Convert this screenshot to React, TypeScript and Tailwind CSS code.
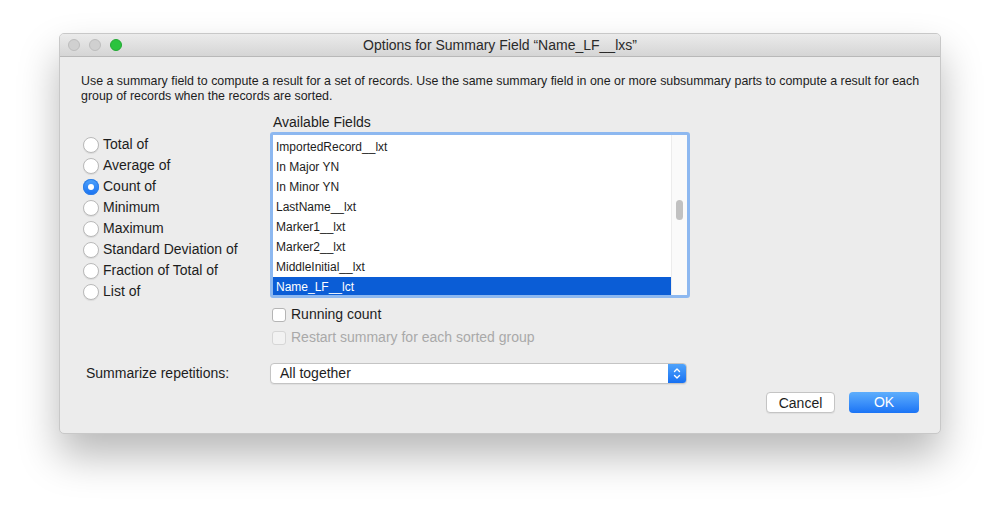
const aggregates = [
  'Total of',
  'Average of',
  'Count of',
  'Minimum',
  'Maximum',
  'Standard Deviation of',
  'Fraction of Total of',
  'List of',
];

const fields = [
  'ImportedRecord__lxt',
  'In Major YN',
  'In Minor YN',
  'LastName__lxt',
  'Marker1__lxt',
  'Marker2__lxt',
  'MiddleInitial__lxt',
  'Name_LF__lct',
];

const Radio = ({ on }: { on: boolean }) =>
  on ? (
    <span className="w-4 h-4 rounded-full bg-gradient-to-b from-[#4fa3fb] to-[#1670f2] flex items-center justify-center shadow-[inset_0_0_0_1px_#2f7fe6]">
      <span className="w-[6px] h-[6px] rounded-full bg-white" />
    </span>
  ) : (
    <span className="w-4 h-4 rounded-full bg-white border border-[#b9b9b9] shadow-[0_1px_1px_rgba(0,0,0,0.08)]" />
  );

export default function App() {
  return (
    <div
      className="w-[1000px] h-[518px] bg-white pt-[33px] pl-[59px] text-[#1d1d1d]"
      style={{ fontFamily: '"Liberation Sans", Arial, sans-serif' }}
    >
      <div className="w-[882px] h-[401px] rounded-[5px] bg-[#ececec] border border-[#c8c8c8] shadow-[0_22px_40px_rgba(0,0,0,0.28)] overflow-hidden flex flex-col">
        {/* title bar */}
        <div className="h-[23px] shrink-0 bg-gradient-to-b from-[#ebebeb] to-[#d5d5d5] border-b border-[#b8b8b8] flex items-center relative">
          <div className="flex gap-[9px] pl-[8px]">
            <span className="w-3 h-3 rounded-full bg-[#d0d0d0] border border-[#bdbdbd]" />
            <span className="w-3 h-3 rounded-full bg-[#d0d0d0] border border-[#bdbdbd]" />
            <span className="w-3 h-3 rounded-full bg-[#2ac33e] border border-[#22a833]" />
          </div>
          <div className="absolute inset-0 flex items-center justify-center text-[14px] text-[#2a2a2a]">
            Options for Summary Field “Name_LF__lxs”
          </div>
        </div>

        <div className="pl-[21px] pr-[12px] pt-[17px]">
          <p className="text-[12.4px] leading-[15px]">
            Use a summary field to compute a result for a set of records. Use the same summary field in one or more subsummary parts to compute a result for each group of records when the records are sorted.
          </p>
        </div>

        <div className="flex pl-[23px] mt-[10px]">
          <div className="w-[187px] pt-[20px] flex flex-col">
            {aggregates.map((a, i) => (
              <label key={a} className="h-[21px] flex items-center gap-[4px] text-[14px]">
                <Radio on={i === 2} />
                <span>{a}</span>
              </label>
            ))}
          </div>

          <div className="w-[420px] flex flex-col">
            <div className="text-[14px] pl-[3px] h-[16px] leading-[16px]">Available Fields</div>
            <div className="mt-[2px] h-[166px] rounded-[3px] border-[3px] border-[#8db8f0] bg-white flex overflow-hidden">
              <div className="flex-1 flex flex-col pt-[2px]">
                {fields.map((f, i) => (
                  <div
                    key={f}
                    className={
                      i === fields.length - 1
                        ? 'h-[20px] leading-[20px] pl-[3px] text-[12px] bg-[#0b5dd6] text-white'
                        : 'h-[20px] leading-[20px] pl-[3px] text-[12px]'
                    }
                  >
                    {f}
                  </div>
                ))}
              </div>
              <div className="w-[16px] border-l border-[#ececec] bg-[#fafafa] pt-[65px] flex justify-center">
                <span className="w-[7px] h-[20px] rounded-full bg-[#c1c1c1]" />
              </div>
            </div>

            <label className="mt-[6px] flex items-center gap-[5px] text-[14px] pl-[2px]">
              <span className="w-[14px] h-[14px] rounded-[3px] bg-white border border-[#b5b5b5]" />
              Running count
            </label>
            <label className="mt-[2px] flex items-center gap-[5px] text-[14px] pl-[2px] text-[#a9a9a9]">
              <span className="w-[14px] h-[14px] rounded-[3px] bg-[#f2f2f2] border border-[#d6d6d6]" />
              Restart summary for each sorted group
            </label>
          </div>
        </div>

        <div className="flex items-center mt-[15px] pl-[26px]">
          <div className="w-[184px] text-[14px]">Summarize repetitions:</div>
          <div className="w-[417px] h-[21px] rounded-[4px] bg-white border border-[#c4c4c4] flex items-center shadow-[0_1px_1px_rgba(0,0,0,0.06)] overflow-hidden">
            <span className="flex-1 pl-[9px] text-[14px]">All together</span>
            <span className="w-[18px] h-full bg-gradient-to-b from-[#4fa3fb] to-[#1670f2] flex items-center justify-center">
              <svg width="8" height="13" viewBox="0 0 8 13" fill="none" stroke="white" strokeWidth="1.4" strokeLinecap="round" strokeLinejoin="round">
                <polyline points="1.5,4.5 4,2 6.5,4.5" />
                <polyline points="1.5,8.5 4,11 6.5,8.5" />
              </svg>
            </span>
          </div>
        </div>

        <div className="flex justify-end gap-[14px] pr-[21px] mt-[8px]">
          <button className="w-[69px] h-[21px] rounded-[4px] bg-white border border-[#c4c4c4] text-[14px] shadow-[0_1px_1px_rgba(0,0,0,0.06)]">
            Cancel
          </button>
          <button className="w-[70px] h-[21px] rounded-[4px] bg-gradient-to-b from-[#5eaefc] to-[#1a73f5] text-white text-[14px]">
            OK
          </button>
        </div>
      </div>
    </div>
  );
}
